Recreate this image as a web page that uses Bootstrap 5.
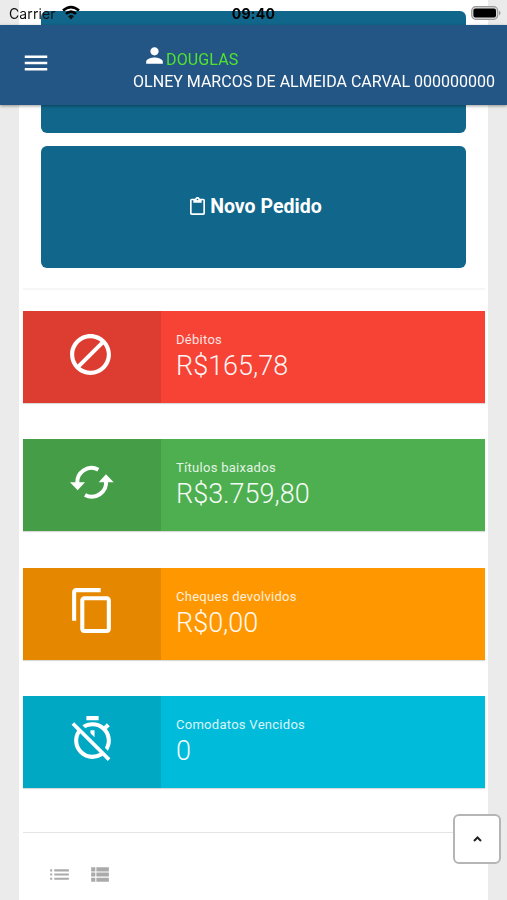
<!DOCTYPE html>
<html lang="pt-BR">
<head>
<meta charset="utf-8">
<meta name="viewport" content="width=device-width, initial-scale=1">
<title>Painel</title>
<link rel="stylesheet" href="https://cdn.jsdelivr.net/npm/bootstrap@5.3.0/dist/css/bootstrap.min.css">
<style>
html,body{height:900px;overflow:hidden}
body{background:#ebebeb;font-family:Roboto,"Liberation Sans",sans-serif;color:#222}
svg{display:block;fill:currentColor;flex:none}
.status{height:25px;font-family:Inter,"Liberation Sans",sans-serif;color:#111;font-size:14px;line-height:28px;padding:0 5px 0 9px}
.status .side{width:100px}
.status .carrier{letter-spacing:.1px}
.status .clock{font-weight:700;font-size:14px;letter-spacing:.25px;color:#000;margin-left:-4px}
.wifi{margin:5px 0 0 6px}
.battery{margin-top:6px}
.topbar{height:80px;background:#245685;color:#fff;box-shadow:0 1px 3px rgba(0,0,0,.4);padding:0 12px 0 21px}
.burger{margin-top:23px}
.who{font-size:16px;line-height:22px;padding-top:20px}
.who .first{height:25.5px;padding-left:9px}
.who .first svg{margin-top:-2px}
.who .nick{color:#50e32e;line-height:29px;letter-spacing:.1px;margin-left:-1px}
.who .full{white-space:nowrap}
.sheet{margin:0 19px;height:900px;background:#fff;padding:11px 3px 0 4px}
.tiles{padding:0 19px 0 18px;gap:13px}
.tile,.tile:hover{height:122px;border-radius:6px;background:#10678b;border:0;color:#fff;font-weight:700;font-size:19.5px;letter-spacing:.03px;padding-left:17px}
.tile svg{margin-right:5px;margin-top:-2px}
.rule{height:2px;background:#f6f6f6;margin:20px 0 21px}
.stats{gap:36.3px}
.stat{height:92px;color:#fff;box-shadow:0 1px 1px rgba(0,0,0,.15)}
.stat .pic{width:138px;background:rgba(0,0,0,.1);padding-top:18.5px}
.stat .pic.sync{padding-top:15.5px}
.stat .info{padding:19px 0 0 15px}
.stat .name{font-size:13px;line-height:20px;letter-spacing:.28px;opacity:.85}
.stat .value{font-size:27px;line-height:32px;font-weight:300;opacity:.95}
.red{background:#f64336}.green{background:#4daf50}.orange{background:#ff9800}.cyan{background:#00bcda}
.rule2{height:1px;background:#e5e5e5;margin:44.5px 0 0}
.views{color:#aaa;padding:29px 0 0 24px;gap:15px}
.totop{right:6px;top:814px;width:48px;height:50px;border:2px solid #b5b5b5;border-radius:6px;background:#fff;padding:0;color:#222}
</style>
<script src="https://cdn.jsdelivr.net/npm/bootstrap@5.3.0/dist/js/bootstrap.bundle.min.js"></script>
</head>
<body>
<header class="fixed-top">
  <div class="status d-flex justify-content-between align-items-start">
    <div class="side d-flex"><span class="carrier">Carrier</span>
      <svg class="wifi" width="18" height="15" viewBox="0 0 18 15"><g fill="none" stroke="#000" stroke-width="2.6"><path d="M1 5.6Q9-1.4 17 5.6"/><path d="M4 8.900Q9 4.300 14 8.900"/></g><path d="M6 11.200Q9 8.700 12 11.200L9 14.500z"/></svg>
    </div>
    <span class="clock">09:40</span>
    <div class="side d-flex justify-content-end">
      <svg class="battery" width="31" height="14" viewBox="0 0 31 14"><rect x=".7" y=".7" width="26" height="12.600" rx="4" fill="#ddd" stroke="#999" stroke-width="1.200"/><rect x="2.400" y="2.400" width="22.600" height="9.200" rx="2" fill="#000"/><path d="M28 4.500Q31 7 28 9.500z" fill="#999"/></svg>
    </div>
  </div>
  <nav class="topbar d-flex justify-content-between">
    <svg class="burger" width="30" height="30" viewBox="0 0 24 24"><path d="M3 18h18v-2H3v2zm0-5h18v-2H3v2zm0-7v2h18V6H3z"/></svg>
    <div class="who">
      <div class="first d-flex"><svg width="25" height="25" viewBox="0 0 24 24"><path d="M12 12c2.210 0 4-1.790 4-4s-1.790-4-4-4-4 1.790-4 4 1.790 4 4 4zm0 2c-2.670 0-8 1.340-8 4v2h16v-2c0-2.660-5.330-4-8-4z"/></svg><span class="nick">DOUGLAS</span></div>
      <div class="full">OLNEY MARCOS DE ALMEIDA CARVAL 000000000</div>
    </div>
  </nav>
</header>
<main class="sheet">
  <div class="tiles d-grid">
    <button class="btn tile" aria-label="Pedidos"></button>
    <button class="btn tile d-flex align-items-center justify-content-center"><svg width="15" height="18" viewBox="3 0 18 22" preserveAspectRatio="none"><path d="M19 2h-4.180C14.400.84 13.300 0 12 0c-1.300 0-2.400.84-2.820 2H5c-1.100 0-2 .9-2 2v16c0 1.100.9 2 2 2h14c1.100 0 2-.9 2-2V4c0-1.100-.9-2-2-2zm-7 0c.55 0 1 .45 1 1s-.45 1-1 1-1-.45-1-1 .45-1 1-1zm7 18H5V4h2v3h10V4h2v16z"/></svg>Novo Pedido</button>
  </div>
  <div class="rule"></div>
  <div class="stats d-flex flex-column">
    <section class="stat red d-flex"><div class="pic d-flex justify-content-center pe-1"><svg width="49" height="49" viewBox="0 0 24 24"><path d="M12 2C6.500 2 2 6.500 2 12s4.500 10 10 10 10-4.500 10-10S17.500 2 12 2zM4 12c0-4.400 3.600-8 8-8 1.800 0 3.500.6 4.900 1.700L5.700 16.900C4.600 15.500 4 13.800 4 12zm8 8c-1.800 0-3.500-.6-4.900-1.700L18.300 7.100C19.400 8.500 20 10.200 20 12c0 4.400-3.600 8-8 8z"/></svg></div><div class="info"><div class="name">Débitos</div><div class="value">R$165,78</div></div></section>
    <section class="stat green d-flex"><div class="pic sync d-flex justify-content-center"><svg width="60" height="50" viewBox="0 0 180 150"><g fill="none" stroke="currentColor" stroke-width="12"><path d="M46 86A43 43 0 0 1 109 44"/><path d="M132 78A43 43 0 0 1 69 120"/></g><path d="M24 82h45L47 106zM110 82h45L132 58z"/></svg></div><div class="info"><div class="name">Títulos baixados</div><div class="value">R$3.759,80</div></div></section>
    <section class="stat orange d-flex"><div class="pic d-flex justify-content-center"><svg width="49" height="49" viewBox="0 0 24 24"><path d="M16 1H4c-1.100 0-2 .9-2 2v14h2V3h12V1zm3 4H8c-1.100 0-2 .9-2 2v14c0 1.100.9 2 2 2h11c1.100 0 2-.9 2-2V7c0-1.100-.9-2-2-2zm0 16H8V7h11v14z"/></svg></div><div class="info"><div class="name">Cheques devolvidos</div><div class="value">R$0,00</div></div></section>
    <section class="stat cyan d-flex"><div class="pic d-flex justify-content-center"><svg width="49" height="49" viewBox="0 0 24 24"><path d="M19.040 4.550l-1.420 1.420C16.070 4.740 14.120 4 12 4c-1.830 0-3.530.55-4.950 1.480l1.460 1.460C9.530 6.350 10.730 6 12 6c3.870 0 7 3.130 7 7 0 1.270-.35 2.470-.94 3.490l1.450 1.450C20.450 16.530 21 14.830 21 13c0-2.120-.74-4.070-1.970-5.610l1.420-1.420-1.410-1.420zM15 1H9v2h6V1zm-4 8.440l2 2V8h-2v1.440zM3.020 4L1.750 5.270 4.500 8.030C3.550 9.450 3 11.160 3 13c0 4.970 4.020 9 9 9 1.840 0 3.550-.55 4.980-1.500l2.500 2.500 1.270-1.270-7.710-7.710L3.020 4zM12 20c-3.870 0-7-3.130-7-7 0-1.280.35-2.480.95-3.520l9.560 9.560c-1.030.61-2.230.96-3.510.96z"/></svg></div><div class="info"><div class="name">Comodatos Vencidos</div><div class="value">0</div></div></section>
  </div>
  <div class="rule2"></div>
  <div class="views d-flex">
    <svg width="25" height="25" viewBox="0 0 24 24"><path d="M3 13h2v-2H3v2zm0 4h2v-2H3v2zm0-8h2V7H3v2zm4 4h14v-2H7v2zm0 4h14v-2H7v2zM7 7v2h14V7H7z"/></svg>
    <svg width="25" height="25" viewBox="0 0 24 24"><path d="M4 14h4v-4H4v4zm0 5h4v-4H4v4zM4 9h4V5H4v4zm5 5h12v-4H9v4zm0 5h12v-4H9v4zM9 5v4h12V5H9z"/></svg>
  </div>
</main>
<button class="btn totop position-fixed d-flex align-items-center justify-content-center" aria-label="Topo"><svg width="9" height="6" viewBox="0 0 9 6"><path d="M1 5l3.500-3.500L8 5" fill="none" stroke="currentColor" stroke-width="2"/></svg></button>
</body>
</html>
